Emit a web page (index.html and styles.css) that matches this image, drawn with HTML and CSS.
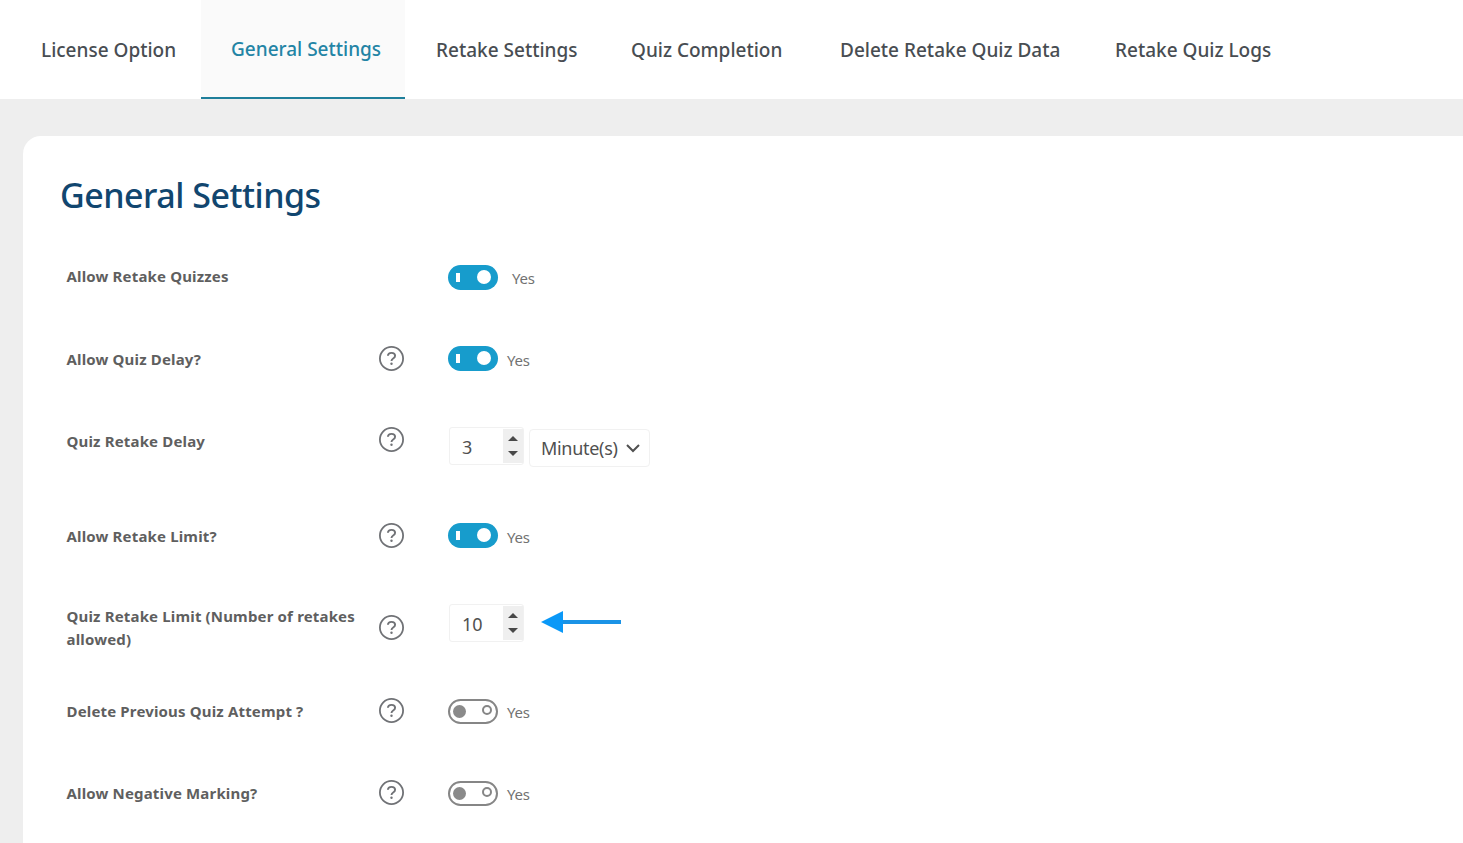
FILE: index.html
```html
<!DOCTYPE html>
<html lang="en">
<head>
  <meta charset="UTF-8">
  <title>General Settings</title>
  <link rel="stylesheet" href="styles.css">
</head>
<body>
  <svg class="sprite" width="0" height="0">
    <symbol id="help" viewBox="0 0 25 25">
      <circle cx="12.5" cy="12.5" r="11.6" fill="none" stroke="currentColor" stroke-width="1.8"/>
      <path d="M8.9 9.8C9 7.9 10.3 6.9 12.5 6.9s3.6 1.1 3.6 2.9c0 1.4-.8 2-1.9 2.7-1.1.7-1.7 1.3-1.7 2.6" fill="none" stroke="currentColor" stroke-width="1.9"/>
      <circle cx="12.5" cy="17.8" r="1.2" fill="currentColor"/>
    </symbol>
  </svg>

  <nav class="tabs">
    <a class="tab">License Option</a>
    <a class="tab active">General Settings</a>
    <a class="tab">Retake Settings</a>
    <a class="tab">Quiz Completion</a>
    <a class="tab">Delete Retake Quiz Data</a>
    <a class="tab">Retake Quiz Logs</a>
  </nav>

  <main class="card">
    <h1 class="title">General Settings</h1>

    <div class="row">
      <div class="label first">Allow Retake Quizzes</div>
      <div class="help"></div>
      <div class="field"><span class="toggle on"></span><span class="yes first">Yes</span></div>
    </div>

    <div class="row row-up">
      <div class="label">Allow Quiz Delay?</div>
      <div class="help"><svg><use href="#help"/></svg></div>
      <div class="field"><span class="toggle on"></span><span class="yes">Yes</span></div>
    </div>

    <div class="row row-delay">
      <div class="label">Quiz Retake Delay</div>
      <div class="help"><svg><use href="#help"/></svg></div>
      <div class="field">
        <div class="number">
          <span class="value">3</span>
          <span class="spin"><i class="up"></i><i class="down"></i></span>
        </div>
        <div class="select">
          <span>Minute(s)</span>
          <svg class="chevron" viewBox="0 0 14 9"><path d="M1 1l6 6 6-6" fill="none" stroke="currentColor" stroke-width="2"/></svg>
        </div>
      </div>
    </div>

    <div class="row row-up">
      <div class="label">Allow Retake Limit?</div>
      <div class="help"><svg><use href="#help"/></svg></div>
      <div class="field"><span class="toggle on"></span><span class="yes">Yes</span></div>
    </div>

    <div class="row row-limit">
      <div class="label">Quiz Retake Limit (Number of retakes<br>allowed)</div>
      <div class="help"><svg><use href="#help"/></svg></div>
      <div class="field">
        <div class="number">
          <span class="value">10</span>
          <span class="spin"><i class="up"></i><i class="down"></i></span>
        </div>
        <svg class="arrow" viewBox="0 0 80 24"><path d="M20 12h60" stroke="#1a93e6" stroke-width="4"/><path d="M0 12L22 1v22z" fill="#0a98f7"/></svg>
      </div>
    </div>

    <div class="row">
      <div class="label">Delete Previous Quiz Attempt ?</div>
      <div class="help"><svg><use href="#help"/></svg></div>
      <div class="field"><span class="toggle"></span><span class="yes">Yes</span></div>
    </div>

    <div class="row">
      <div class="label">Allow Negative Marking?</div>
      <div class="help"><svg><use href="#help"/></svg></div>
      <div class="field"><span class="toggle"></span><span class="yes">Yes</span></div>
    </div>
  </main>
</body>
</html>
```

FILE: styles.css
```css
*,
*::before,
*::after {
  box-sizing: border-box;
}

body {
  margin: 0;
  height: 843px;
  overflow: hidden;
  background: #eeeeee;
  color: #5f5f5f;
  font-family: "Noto Sans", "Open Sans", sans-serif;
}

.sprite {
  display: block;
}

/* Top tabs */
.tabs {
  display: grid;
  grid-template-columns: 190px 204px 196px 209px 275px 220px;
  height: 99px;
  padding-left: 11px;
  background: #fff;
}

.tab {
  height: 99px;
  padding-left: 30px;
  color: #484d52;
  font-size: 19px;
  font-weight: 500;
  line-height: 101px;
  white-space: nowrap;
}

.tab.active {
  background: #fafafa;
  border-bottom: 2px solid #1f7f9b;
  color: #2384a5;
  line-height: 99px;
}

.tab.active + .tab {
  padding-left: 31px;
}

/* Settings card */
.card {
  height: 720px;
  margin: 37px 0 0 23px;
  background: #fff;
  border-top-left-radius: 18px;
}

.title {
  height: 100px;
  margin: 0;
  padding: 35px 0 0 37px;
  color: #11466f;
  font-size: 34px;
  font-weight: 500;
  letter-spacing: -0.5px;
  line-height: 48px;
}

.row {
  display: grid;
  grid-template-columns: 312px 69px 1fr;
  align-items: center;
  height: 82px;
  padding-left: 44px;
}

.row-delay {
  height: 95px;
  padding-bottom: 13px;
}

.row-limit {
  height: 93px;
}

.label {
  margin-left: -0.5px;
  font-size: 15px;
  font-weight: 700;
  letter-spacing: 0.16px;
  line-height: 23px;
  white-space: nowrap;
}

.label.first {
  margin-top: -2px;
}

.help {
  height: 25px;
  margin-top: -1px;
  color: #707276;
}

.help svg {
  display: block;
  width: 25px;
  height: 25px;
}

.field {
  display: flex;
  align-items: center;
}

.row-up .field {
  margin-top: -2px;
}

.toggle {
  display: flex;
  align-items: center;
  justify-content: space-between;
  width: 50px;
  height: 25px;
  padding: 0 4px 0 3px;
  border: 2px solid #868686;
  border-radius: 13px;
}

.toggle::before {
  content: "";
  width: 13px;
  height: 13px;
  border-radius: 50%;
  background: #8a8a8a;
}

.toggle::after {
  content: "";
  width: 10px;
  height: 10px;
  margin-bottom: 2px;
  border: 2px solid #868686;
  border-radius: 50%;
}

.toggle.on {
  padding: 0 7px 0 8px;
  border: 0;
  background: #179ccc;
}

.toggle.on::before {
  width: 4px;
  height: 9px;
  border-radius: 0;
  background: #fff;
}

.toggle.on::after {
  width: 14px;
  height: 14px;
  margin: 0;
  border: 0;
  background: #fff;
}

.yes {
  margin-left: 9px;
  padding-top: 1px;
  color: #727272;
  font-size: 15px;
  letter-spacing: -0.2px;
  line-height: 20px;
}

.yes.first {
  margin-left: 14px;
}

.row-up .yes {
  padding-top: 3px;
}

.number {
  display: flex;
  width: 75px;
  height: 38px;
  margin-left: 1px;
  border: 1px solid #f1f1f1;
  border-radius: 3px;
  color: #505050;
  font-size: 18px;
}

.value {
  flex: 1;
  padding: 1px 0 0 12px;
  line-height: 36px;
}

.spin {
  display: flex;
  flex-direction: column;
  align-items: center;
  justify-content: center;
  gap: 10px;
  width: 20px;
  height: 34px;
  margin-top: 1px;
  background: #efefef;
}

.up,
.down {
  border-left: 5px solid transparent;
  border-right: 5px solid transparent;
}

.up {
  border-bottom: 5px solid #484848;
}

.down {
  border-top: 5px solid #484848;
}

.select {
  display: flex;
  align-items: center;
  width: 121px;
  height: 38px;
  margin-left: 5px;
  padding-left: 11px;
  border: 1px solid #f1f1f1;
  border-radius: 4px;
  color: #505050;
  font-size: 18px;
  letter-spacing: -0.3px;
  white-space: nowrap;
}

.select span {
  width: 85px;
}

.chevron {
  width: 14px;
  height: 9px;
}

.row-delay .help {
  margin-top: -3px;
}

.row-delay .number {
  margin-top: 10px;
}

.row-delay .select {
  margin-top: 14px;
}

.row-limit .label,
.row-limit .help {
  margin-top: 8px;
}

.row-limit .field {
  margin-top: -1px;
}

.arrow {
  width: 80px;
  height: 24px;
  margin: -2px 0 0 17px;
}
```
